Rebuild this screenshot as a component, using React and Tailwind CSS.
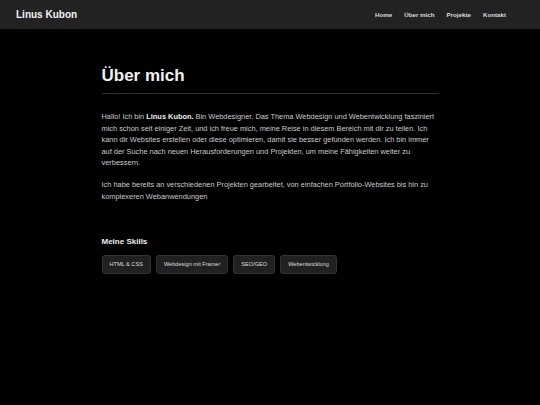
const SKILLS = ['HTML & CSS', 'Webdesign mit Framer', 'SEO/GEO', 'Webentwicklung']
const NAV = ['Home', 'Über mich', 'Projekte', 'Kontakt']

export default function App() {
  return (
    <div className="min-h-[405px] bg-black text-white font-['Liberation_Sans',Arial,sans-serif]">
      {/* Header */}
      <header className="h-[29px] bg-[#222222] flex items-center justify-between pl-[16px] pr-[34px] shadow-[0_1px_3px_rgba(0,0,0,0.6)]">
        <div className="text-[10px] font-bold text-[#f2f2f2]">Linus Kubon</div>
        <nav className="flex gap-[12px] text-[6.2px] font-bold text-[#dddddd]">
          {NAV.map((n) => (
            <a key={n} className="cursor-pointer">{n}</a>
          ))}
        </nav>
      </header>

      <main className="w-[337px] mx-auto pt-[36px]">
        <h1 className="text-[17px] font-bold text-[#f0f0f0] leading-[22px]">Über mich</h1>
        <div className="h-px bg-[#2e2e2e] mt-[6px] mb-[17px]" />

        <p className="text-[7.4px] leading-[11.6px] text-[#cccccc]">
          Hallo! Ich bin <span className="font-bold text-[#eeeeee]">Linus Kubon.</span> Bin Webdesigner. Das Thema Webdesign und Webentwicklung fasziniert mich schon seit einiger Zeit, und ich freue mich, meine Reise in diesem Bereich mit dir zu teilen. Ich kann dir Websites erstellen oder diese optimieren, damit sie besser gefunden werden. Ich bin immer auf der Suche nach neuen Herausforderungen und Projekten, um meine Fähigkeiten weiter zu verbessern.
        </p>
        <p className="text-[7.4px] leading-[11.6px] text-[#cccccc] mt-[10px]">
          Ich habe bereits an verschiedenen Projekten gearbeitet, von einfachen Portfolio-Websites bis hin zu komplexeren Webanwendungen
        </p>

        <h2 className="text-[8px] font-bold text-[#eeeeee] mt-[34px]">Meine Skills</h2>
        <div className="flex gap-[5px] mt-[7px]">
          {SKILLS.map((s) => (
            <span
              key={s}
              className="h-[19px] px-[7px] flex items-center bg-[#212121] border border-[#333333] rounded-[3px] text-[5.6px] text-[#dddddd]"
            >
              {s}
            </span>
          ))}
        </div>
      </main>
    </div>
  )
}
